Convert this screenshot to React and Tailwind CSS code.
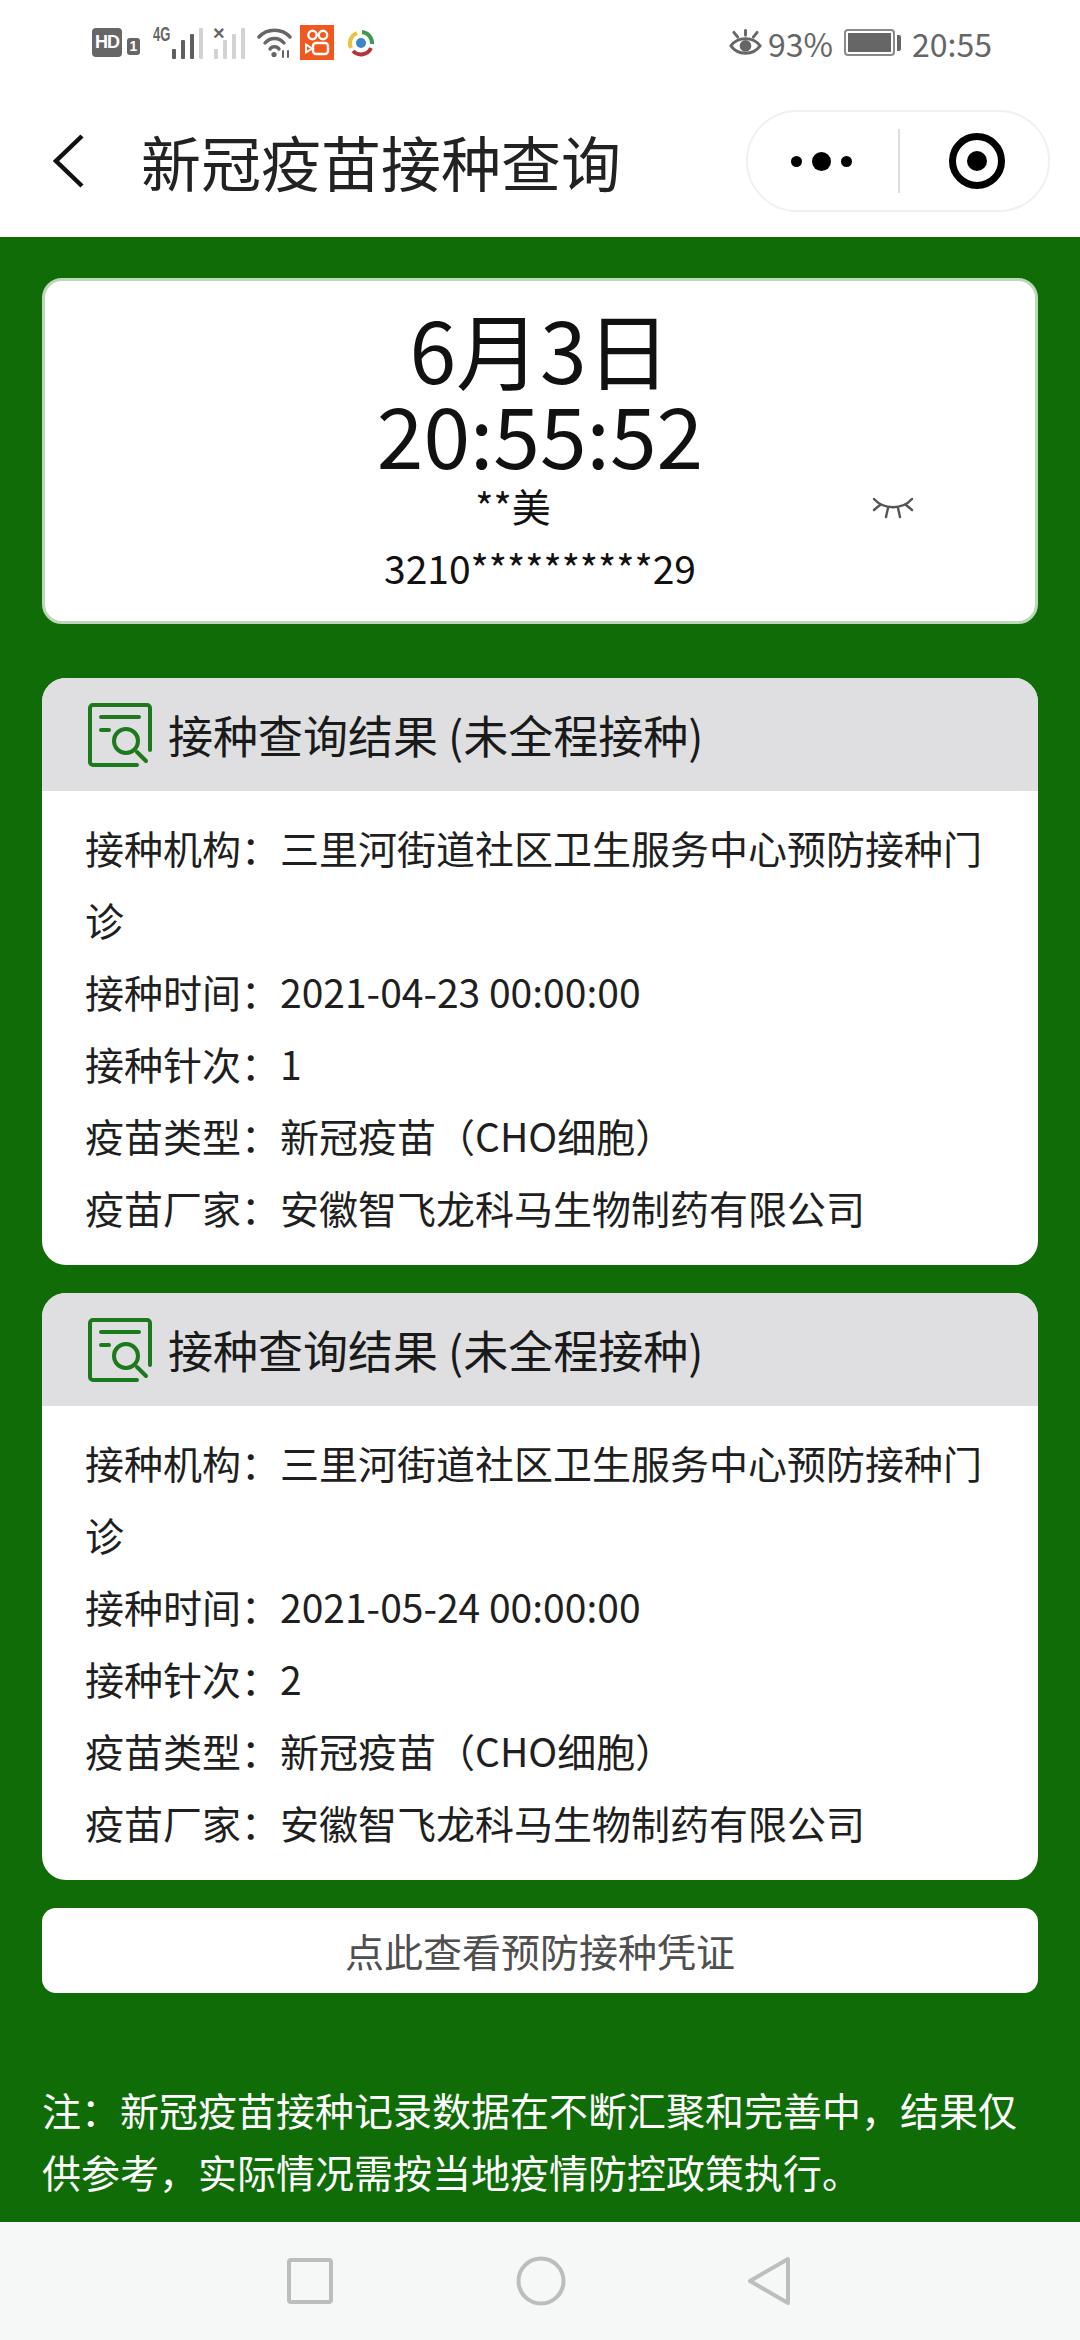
import React from 'react';

const records = [
  { time: '2021-04-23 00:00:00', dose: '1' },
  { time: '2021-05-24 00:00:00', dose: '2' },
];

const cjk = "font-['Noto_Sans_CJK_SC','Noto_Sans',sans-serif]";

function SignalBars({ level, width, children }) {
  const heights = [10, 19, 25, 31];
  return (
    <div className="relative h-[32px]" style={{ width }}>
      {children}
      <div className="absolute bottom-0 right-0 flex items-end gap-[5px]">
        {heights.map((h, i) => (
          <div
            key={h}
            className={`w-[4px] rounded-[1px] ${i < level ? 'bg-[#5f5f5f]' : 'bg-[#d2d2d2]'}`}
            style={{ height: h }}
          />
        ))}
      </div>
    </div>
  );
}

function StatusBar() {
  return (
    <div className="flex h-[75px] items-center justify-between pl-[92px] pr-[88px] pt-[10px] text-[#666666]">
      <div className="flex items-center">
        <span className="flex h-[29px] w-[30px] items-center justify-center rounded-[4px] bg-[#666666] font-['Liberation_Sans',sans-serif] text-[18px] font-bold tracking-[-1px] text-white">
          HD
        </span>
        <span className="ml-[5px] mt-[7px] flex h-[17px] w-[13px] items-center justify-center rounded-[3px] bg-[#666666] font-['Liberation_Sans',sans-serif] text-[14px] font-bold text-white">
          1
        </span>
        <div className="ml-[13px]">
          <SignalBars level={3} width={50}>
            <span className="absolute left-0 top-[-3px] origin-left scale-x-[0.62] font-['Liberation_Sans',sans-serif] text-[21px] font-bold leading-[20px] text-[#666666]">
              4G
            </span>
          </SignalBars>
        </div>
        <div className="ml-[10px]">
          <SignalBars level={0} width={32}>
            <span className="absolute left-0 top-[-4px] font-['Liberation_Sans',sans-serif] text-[20px] font-bold leading-[20px] text-[#666666]">
              ×
            </span>
          </SignalBars>
        </div>
        <svg className="ml-[12px]" width="35" height="30" viewBox="0 0 35 30" fill="none" stroke="#666666" strokeWidth="3.4" strokeLinecap="round">
          <path d="M2 9C10 0 25 0 33 9" />
          <path d="M8 15C13 9 22 9 27 15" />
          <path d="M13 21C15 18 20 18 22 21" />
          <circle cx="17" cy="26.5" r="2.6" fill="#666666" stroke="none" />
          <path d="M26 29V23M31 29V23" strokeWidth="2" />
        </svg>
        <svg className="ml-[8px]" width="34" height="35" viewBox="0 0 34 35">
          <rect width="34" height="35" fill="#f0581f" />
          <circle cx="12.5" cy="10" r="4.2" fill="none" stroke="#fff" strokeWidth="2.4" />
          <circle cx="23" cy="10" r="4.2" fill="none" stroke="#fff" strokeWidth="2.4" />
          <rect x="13" y="18" width="15" height="11" rx="3" fill="none" stroke="#fff" strokeWidth="2.4" />
          <path d="M6 19.5L12 23.5L6 27.5Z" fill="none" stroke="#fff" strokeWidth="2" />
        </svg>
        <svg className="ml-[13px]" width="28" height="28" viewBox="0 0 28 28" fill="none" strokeWidth="4">
          <path d="M15 3A11 11 0 0 1 25 15" stroke="#3f9a4e" />
          <path d="M24 19A11 11 0 0 1 6 22" stroke="#b5343a" />
          <path d="M4 19A11 11 0 0 1 10 4" stroke="#e8c33d" />
          <circle cx="14" cy="14" r="5" fill="#3d86c6" stroke="none" />
        </svg>
      </div>
      <div className={`flex items-center text-[32px] leading-none ${cjk}`}>
        <svg width="33" height="30" viewBox="0 0 34 30" fill="none" stroke="#666666" strokeWidth="3">
          <path d="M2 18C9 8 25 8 32 18C25 28 9 28 2 18Z" />
          <circle cx="17" cy="18" r="6" fill="#666666" stroke="none" />
          <path d="M17 2V7M5 4L9 9M29 4L25 9" strokeLinecap="round" />
        </svg>
        <span className="ml-[6px]">93%</span>
        <div className="ml-[11px] h-[27px] w-[51px] rounded-[4px] border-[2px] border-[#8a8a8a] p-[2px]">
          <div className="h-full w-full bg-[#666666]" />
        </div>
        <div className="ml-[2px] h-[16px] w-[4px] rounded-r-[2px] bg-[#666666]" />
        <span className="ml-[11px]">20:55</span>
      </div>
    </div>
  );
}

function NavBar() {
  return (
    <div className="flex h-[162px] items-center bg-white pt-[10px]">
      <svg className="ml-[50px]" width="36" height="56" viewBox="0 0 36 56" fill="none" stroke="#111111" strokeWidth="4.5">
        <path d="M32 3L6 28L32 53" />
      </svg>
      <h1 className={`ml-[55px] text-[60px] font-normal leading-none text-[#222222] ${cjk}`}>新冠疫苗接种查询</h1>
      <div className="ml-auto mr-[30px] flex h-[102px] w-[304px] items-center rounded-full border-[2px] border-[#f0f0f0] bg-white">
        <div className="flex w-[150px] items-center justify-center gap-[10px] pr-[4px]">
          <span className="h-[11px] w-[11px] rounded-full bg-black" />
          <span className="h-[19px] w-[19px] rounded-full bg-black" />
          <span className="h-[11px] w-[11px] rounded-full bg-black" />
        </div>
        <div className="h-[64px] w-[2px] bg-[#dddddd]" />
        <div className="flex flex-1 items-center justify-center pl-[6px]">
          <span className="flex h-[56px] w-[56px] items-center justify-center rounded-full border-[7px] border-black">
            <span className="h-[20px] w-[20px] rounded-full bg-black" />
          </span>
        </div>
      </div>
    </div>
  );
}

function ResultIcon() {
  return (
    <svg width="64" height="64" viewBox="0 0 64 64" fill="none" stroke="#1c7a1c" strokeWidth="4" strokeLinecap="round">
      <path d="M62 47V5a3 3 0 0 0-3-3H5a3 3 0 0 0-3 3v54a3 3 0 0 0 3 3h44" />
      <path d="M13 14H51M13 27H21" />
      <circle cx="38" cy="38" r="12" />
      <path d="M49 49L58 58" />
    </svg>
  );
}

function ResultCard({ time, dose }) {
  const rowClass = 'flex h-[72px] items-center whitespace-pre';
  return (
    <div className="overflow-hidden rounded-[24px] bg-white">
      <div className="flex h-[113px] items-center gap-[16px] bg-[#dfdfe1] pl-[46px] pr-[20px]">
        <ResultIcon />
        <span className="text-[45px] leading-none text-[#1a1a1a]">接种查询结果 (未全程接种)</span>
      </div>
      <div className="px-[43px] pb-[22px] pt-[20px] text-[39px] text-[#1f1f1f]">
        <div className={rowClass}>接种机构：三里河街道社区卫生服务中心预防接种门</div>
        <div className={rowClass}>诊</div>
        <div className={rowClass}>接种时间：{time}</div>
        <div className={rowClass}>接种针次：{dose}</div>
        <div className={rowClass}>疫苗类型：新冠疫苗（CHO细胞）</div>
        <div className={rowClass}>疫苗厂家：安徽智飞龙科马生物制药有限公司</div>
      </div>
    </div>
  );
}

function NavKeys() {
  return (
    <div className="flex h-[118px] items-center bg-[#f6f7f7] pl-[287px]">
      <svg width="46" height="46" viewBox="0 0 46 46" fill="none" stroke="#bdbdbd" strokeWidth="4">
        <rect x="2" y="2" width="42" height="42" rx="2" />
      </svg>
      <svg className="ml-[183px]" width="50" height="50" viewBox="0 0 50 50" fill="none" stroke="#bdbdbd" strokeWidth="4">
        <circle cx="25" cy="25" r="22.5" />
      </svg>
      <svg className="ml-[181px]" width="44" height="50" viewBox="0 0 44 50" fill="none" stroke="#bdbdbd" strokeWidth="4" strokeLinejoin="round">
        <path d="M41 3V47L3 25Z" />
      </svg>
    </div>
  );
}

export default function App() {
  return (
    <div className={`flex h-[2340px] w-[1080px] flex-col bg-white ${cjk}`}>
      <StatusBar />
      <NavBar />
      <div className="flex-1 bg-[#106c07] px-[42px] pt-[41px]">
        <div className="relative flex h-[346px] flex-col items-center rounded-[20px] border-[3px] border-[#bcd8b8] bg-white text-[#111111]">
          <div className="mt-[24px] text-[84px] leading-[85px]">6月3日</div>
          <div className="text-[84px] leading-[85px]">20:55:52</div>
          <div className="mr-[54px] mt-[4px] text-[39px] leading-[52px]">**美</div>
          <div className="mt-[10px] text-[39px] leading-[52px]">3210**********29</div>
          <svg className="absolute right-[120px] top-[215px]" width="44" height="26" viewBox="0 0 44 26" fill="none" stroke="#555555" strokeWidth="2.4" strokeLinecap="round">
            <path d="M3 3C13 14 31 14 41 3" />
            <path d="M9 9L3 14M17 12L15 21M27 12L29 21M35 9L41 14" />
          </svg>
        </div>
        <div className="mt-[54px] flex flex-col gap-[28px]">
          {records.map((r) => (
            <ResultCard key={r.dose} time={r.time} dose={r.dose} />
          ))}
          <div className="flex h-[85px] items-center justify-center rounded-[14px] bg-white text-[39px] text-[#4f4f4f]">
            点此查看预防接种凭证
          </div>
        </div>
        <p className="mt-[85px] text-[39px] leading-[62px] text-white">
          注：新冠疫苗接种记录数据在不断汇聚和完善中，结果仅供参考，实际情况需按当地疫情防控政策执行。
        </p>
      </div>
      <NavKeys />
    </div>
  );
}
